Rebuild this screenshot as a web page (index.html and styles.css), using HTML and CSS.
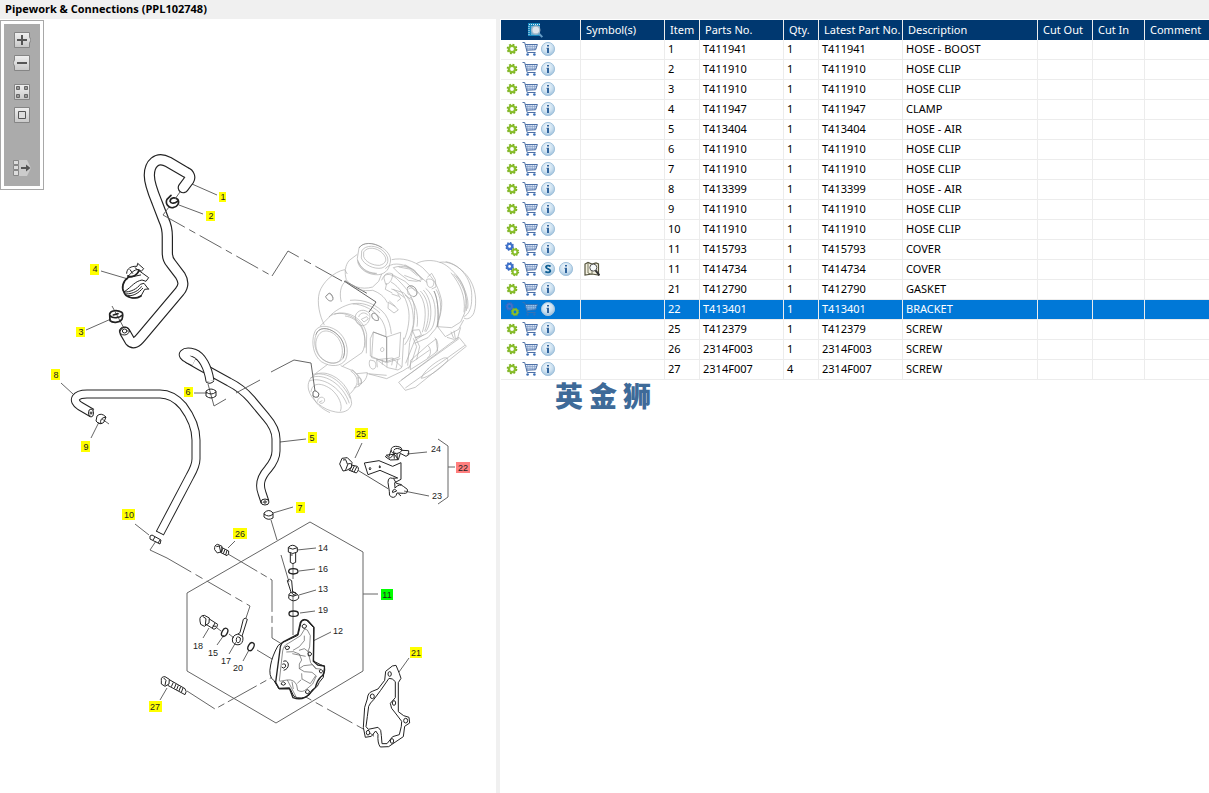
FILE: index.html
```html
<!DOCTYPE html>
<html lang="en">
<head>
<meta charset="utf-8">
<title>Pipework &amp; Connections (PPL102748)</title>
<link rel="stylesheet" href="styles.css">
</head>
<body>
<svg class="defs" width="0" height="0" aria-hidden="true">
  <defs>
    <radialGradient id="ball" cx="45%" cy="35%" r="65%"><stop offset="0" stop-color="#f4f9fd"/><stop offset=".6" stop-color="#cbe0f0"/><stop offset="1" stop-color="#9fc1dc"/></radialGradient>
    <linearGradient id="key" x1="0" y1="0" x2="0" y2="1"><stop offset="0" stop-color="#f0f0f0"/><stop offset="1" stop-color="#c8c8c8"/></linearGradient>
    <symbol id="cog" viewBox="0 0 16 16"><circle cx="8" cy="8" r="3.1" fill="none" stroke="#8abf2c" stroke-width="2.4"/><circle cx="8" cy="8" r="4.6" fill="none" stroke="#7ab021" stroke-width="1.5" stroke-dasharray="1.9 1.71"/></symbol>
    <symbol id="cogs" viewBox="0 0 16 16"><circle cx="5.6" cy="5.4" r="2.5" fill="none" stroke="#3f72cc" stroke-width="2.2"/><circle cx="5.6" cy="5.4" r="3.8" fill="none" stroke="#3565bd" stroke-width="1.2" stroke-dasharray="1.5 1.48"/><circle cx="11" cy="11" r="2.4" fill="none" stroke="#8abf2c" stroke-width="2"/><circle cx="11" cy="11" r="3.6" fill="none" stroke="#7ab021" stroke-width="1.2" stroke-dasharray="1.4 1.43"/></symbol>
    <symbol id="cart" viewBox="0 0 16 16"><path d="M3 3.500H15.400L13.800 8.600 4.800 9.400Z" fill="#e4ecf7"/><path d="M5.700 3.700V9M8 3.700V9M10.300 3.700V9M12.600 3.700V9M3.600 5.500H15M4 7.300H14.400" fill="none" stroke="#7f9cc8" stroke-width=".7"/><path d="M.5 1.500H2.700L5.200 11.500H13.600M3.200 3.500H15.400L13.600 8.800 4.800 9.200" fill="none" stroke="#4d70a6"/><circle cx="5.600" cy="13.500" r="1.300" fill="#3b6eb5"/><circle cx="12.400" cy="13.500" r="1.300" fill="#3b6eb5"/></symbol>
    <symbol id="info" viewBox="0 0 16 16"><circle cx="8" cy="8" r="6.6" fill="url(#ball)" stroke="#a3c3dd"/><path d="M7 4H9V5.6H7ZM6.500 6.800H9V12H7V7.800H6.500Z" fill="#2f639c"/></symbol>
    <symbol id="super" viewBox="0 0 16 16"><circle cx="8" cy="8" r="6.6" fill="url(#ball)" stroke="#a3c3dd"/><path d="M10.6 5.4C9.4 4.4 6 4.2 6 6.1 6 8.3 10.3 7.3 10.3 9.8 10.3 12 6.5 11.6 5.3 10.6" fill="none" stroke="#0d5d92" stroke-width="1.9"/></symbol>
    <symbol id="book" viewBox="0 0 16 16"><path d="M1 3V14L8 13 14.5 14V3L12 2 8 3 4 1.5Z" fill="#f3f0df" stroke="#55543f" stroke-width="1.2"/><path d="M4 2V12L8 13.5V3" fill="none" stroke="#77765f"/><circle cx="9.3" cy="6.6" r="3.5" fill="#f7fafb" stroke="#555"/><path d="M11.5 9.3L15.5 14.5" stroke="#333" stroke-width="2"/></symbol>
    <symbol id="find" viewBox="0 0 16 16"><path d="M1 1H13V14H1Z" fill="#1687be"/><path d="M2 2.5H13M2 4V14" stroke="#d8edf7" stroke-dasharray="1 1"/><path d="M4 4H13V13H4Z" fill="#69aed2"/><circle cx="8.8" cy="8" r="4" fill="#dce5ed" stroke="#a2b8c9" stroke-width="1.3"/><path d="M11.8 11.3L15.3 15.2" stroke="#679ec8" stroke-width="2"/></symbol>
  </defs>
</svg>

<header class="titlebar"><h1>Pipework &amp; Connections (PPL102748)</h1></header>
<main class="panes">
  <section class="drawing" aria-label="Exploded view">
    <svg class="diagram" viewBox="0 19 496 774" role="img" aria-label="Pipework diagram">
      <g class="leader">
        <path d="M192 184L217 195M179 205L203 214M101 271L128 279M86 330L111 319M61 383L73 394M99 422L91 438M135 524L149 535M194 393L207 393M280 442L306 439M273 513L293 507"/>
        <path d="M112 306L125 330M208 384L214 406L226 399M271 372L294 360L311 363M271 520L277 540M156 541L150 550L167 558M102 419L109 424"/>
        <path d="M272 276L288 251L342 281" stroke-dasharray="42 6 8 5"/><path d="M345 281L370 295" stroke-dasharray="25 5 7 5"/>
        <path d="M167 558L250 606" stroke-dasharray="28 5 8 5"/><path d="M250 606L246 618M228 554L272 580V638L285 646" stroke-dasharray="34 4 7 4"/>
        <path d="M310 522L363 552V671L276 723L187 671V593ZM363 594L378 594M281 555L289 582M293 563V579M293 595V635"/>
        <path d="M297 550L316 548M299 571L315 569M299 595L316 590M300 613L315 611M313 641L331 632M228 548L235 541M362 443L355 458M407 454L427 452M404 491L429 496M438 439L448 446V497L438 504M448 467L455 467M209 628L203 638M224 635L217 645M236 642L229 654M249 650L243 661M217 628L221 631M229 634L234 638M257 650L277 662M409 658L399 672M167 688L160 700"/>
        <path d="M187 691L215 709L276 675" stroke-dasharray="33 4 7 4"/><path d="M286 686L374 735" stroke-dasharray="29 5 8 5"/>
      </g>

      <g class="tube wide" transform="translate(70 140) scale(.3333)">
        <path id="h1" d="M340 143L357 120C362 112 358 101 348 97L295 66C260 47 238 72 238 106C238 130 248 156 261 187L281 239C290 257 292 271 292 290V338C292 352 295 361 303 370L331 407C343 427 341 439 329 454L214 591C201 607 190 614 180 603L165 577"/>
        <use href="#h1" class="bore"/>
        <path class="gap" d="M283 203L303 250"/>
        <ellipse class="ink" cx="163" cy="573" rx="15" ry="12"/><ellipse class="ink" cx="164" cy="573" rx="7" ry="6"/>
        <path class="ink strong" d="M291 178C285 190 295 205 309 203C323 201 329 189 324 179C317 171 302 171 300 184C303 193 315 190 322 184M291 178L303 166M119 522C121 512 141 508 155 517C161 521 159 528 156 538C147 550 127 549 120 542ZM120 527C130 538 149 533 157 525M130 525L144 521"/>
        <path class="ink" d="M170 400C170 385 183 378 201 379L203 370L221 386L214 394L207 389C193 386 180 403 174 409M174 408C188 414 201 406 207 392L236 413L228 424L216 420C193 425 189 437 162 456C154 444 158 424 174 413L212 405M162 456C165 471 193 481 213 468L224 448L236 447M162 456C181 458 203 445 211 433L222 430L235 447M168 462C191 462 208 450 214 440M175 467C191 469 207 458 218 445M180 389L188 400M195 383L207 393"/>
        <path class="ink strong" d="M162 456C154 444 158 424 174 413M162 456C165 471 193 481 213 468M174 408C188 414 201 406 207 392"/>
      </g>

      <g class="tube">
        <path id="h5" d="M187 358.500L200 366L229 382C239 387 244 391 251 399L266 417C273 425 276 432 276 439V451C276 458 273 463 268 469C260 478 259 485 262 493L265 502"/>
        <use href="#h5" class="bore"/>
        <path id="h5b" d="M210 381C208 367 202 356 194 353C184 350 179 355 188 359L194 362"/>
        <use href="#h5b" class="bore"/>
        <path id="h8" d="M92 413L80 406C71 400 76 394 87 394H160C169 394 177 399 183 406C192 418 196 429 196 440V459C196 465 194 469 190 476L160 533"/>
        <use href="#h8" class="bore"/>
        <g class="ink"><path d="M206 382Q210 385 214 381M156 531L164 535"/><ellipse cx="91" cy="413" rx="2.500" ry="4"/><circle cx="91" cy="413" r="1"/><ellipse cx="265" cy="502" rx="4" ry="3"/><circle cx="265" cy="502" r="1.200"/></g>
        <g class="ink strong"><path d="M206 391Q211 387 216 391V396Q211 400 206 396ZM206 392Q211 396 216 392M264 513Q269 508 273 513V518Q268 521 264 517ZM264 514Q269 518 273 514M97 416Q101 412 106 417L104 422Q100 426 96 421ZM101 424Q99 418 106 417M150 536L152 535 161 540 160 544 150 539ZM153 540L155 537M158 543L160 540"/></g>
      </g>
      <g class="leader">
        <path d="M180 192L175 199M169 207L163 215"/><path d="M163 215L272 276" stroke-dasharray="25 5 7 5"/><path d="M236 393L260 380"/>
      </g>

      <g class="turbo" transform="translate(290 230) scale(.3333)">
        <path d="M207 54C218 36 250 36 276 53C297 66 307 86 299 103C297 119 282 137 255 134C225 131 201 111 202 85ZM215 63C226 43 261 45 281 64C301 85 296 106 276 114C252 119 221 104 214 84ZM221 66C232 49 260 52 277 69C295 87 288 101 269 106C248 107 226 95 221 80ZM204 91C209 112 230 128 257 130M205 96C214 118 235 133 261 130M202 73L178 91C165 105 163 130 169 149C180 168 215 181 248 171L266 154L275 132"/>
        <path d="M164 119C132 125 97 157 88 188C80 218 89 258 103 285M117 190C122 187 132 202 128 210C121 218 109 208 107 199ZM110 198C114 185 123 191 129 204M164 119L172 132M169 153C150 164 148 194 154 216M165 151C193 181 219 184 248 181C267 188 283 199 292 218"/>
        <path d="M73 309C80 284 112 283 141 302C170 323 178 362 167 389C154 410 122 413 94 395C70 377 63 338 73 309ZM78 314C85 290 114 291 137 309C164 330 169 363 159 385C147 402 119 405 96 387C74 368 70 336 78 314ZM84 318C98 292 129 303 145 325C160 348 161 376 149 392C129 410 99 394 85 372C74 349 76 332 84 318M90 289L122 257C142 243 177 250 203 272C228 296 230 346 216 368L158 408M117 261C131 244 161 226 187 221C222 224 252 239 275 270C285 287 290 306 287 320M133 253C171 239 220 263 230 313L229 370M165 258C204 263 229 299 225 353M188 222C212 215 248 226 270 249M180 211C220 206 263 224 286 254C296 269 302 289 304 312"/>
        <path d="M250 306L290 321 332 307 328 381 289 395 245 383ZM290 321V395M250 306L241 326V378L289 398L331 386M272 357C276 348 284 354 281 362C275 368 270 363 272 357M240 390C236 397 237 414 247 417C260 419 260 400 253 393ZM260 389L308 384L318 395L336 412L324 420L293 413ZM237 432L290 446L338 423L357 411M231 431L290 436M260 389L262 412M277 389V404M291 386V412M309 384L305 406M324 388L318 416"/>
        <path d="M196 258C202 239 224 235 238 250C244 265 234 286 218 287C203 286 196 276 196 258ZM206 261C211 244 229 247 235 257M214 268L230 260L235 267L222 276ZM246 252C252 244 268 257 265 271C255 275 242 263 246 252M295 217L316 230 325 240 312 249 294 235ZM298 213L317 230"/>
        <path d="M275 151C285 123 308 132 327 153C344 170 360 187 370 216C378 247 373 292 359 336M282 145C280 131 297 126 308 132C307 147 301 161 287 163ZM305 133L345 154 376 183M303 156C330 171 346 200 354 231C362 262 354 303 343 328M290 160L286 178 307 189M305 89C337 82 371 92 398 113L415 131C435 151 448 180 455 213C457 238 448 271 437 296L414 323L374 340M286 116C303 97 335 98 363 116L387 137L412 158M310 113C340 103 361 113 377 126L398 148L380 154L355 151L325 128ZM326 111L358 117L383 138M344 104L373 120L394 147M343 136L393 155"/>
        <path d="M352 174C358 162 374 168 378 178C384 188 381 199 370 200L354 192ZM356 177C364 170 374 175 378 184M345 195C363 208 372 245 370 283C366 309 356 329 344 345M360 201C380 225 386 262 381 290M382 184C408 210 412 259 397 307M391 183C420 211 421 263 404 304M400 180C432 215 426 279 407 306M407 175C436 198 442 246 430 285C424 306 399 321 374 322M367 301L388 299 394 314 377 324ZM304 177L340 188 361 208M310 178L342 202M305 192L326 199M323 191L332 206L322 214"/>
        <path d="M379 101C399 89 430 90 446 96C469 101 488 122 505 142C528 171 532 211 524 249L512 276 485 293 442 290M449 97C476 92 507 108 532 138C558 170 562 216 552 248C545 265 530 270 522 264M467 95C515 104 549 154 545 206C546 231 537 254 521 260M483 128C511 163 528 199 522 247M491 132C518 163 536 202 529 243M499 137C524 168 538 207 533 236M412 142L425 130 436 149 438 171 425 177M410 148C426 144 437 153 429 168C420 178 409 170 410 148M432 183C442 203 447 238 443 290M443 290L466 320 506 298L521 270M438 178C452 198 457 236 446 269M483 305L491 325M492 302L496 325M471 322L491 328L503 324L512 292"/>
        <path d="M326 457L346 481 376 472 529 349 507 322 481 340ZM334 450L507 326M346 474L525 346M413 347C424 352 425 378 411 385M362 391L412 347L438 327L443 363L413 386L361 419ZM366 397L419 360M434 323C445 331 447 356 438 365M394 445C400 425 430 400 455 387C469 379 479 385 470 395C450 418 415 442 394 445M370 325L380 350L369 384L356 416M377 324L389 350L380 389M401 314L374 332L347 400M341 323L336 411M359 337L353 407"/>
        <path d="M56 480C48 448 74 422 112 431C151 442 181 478 185 520C181 544 156 550 137 546C99 540 64 510 56 480ZM63 486C66 454 99 459 125 479C147 498 159 526 151 544M58 453C95 438 151 471 171 523M61 444C100 426 159 461 178 520M68 433C113 425 156 451 181 506M76 431L113 403M152 407L190 423C213 438 225 468 198 471L181 491M182 423C204 436 208 464 191 475M186 418L204 438 207 468M201 431L232 428C231 451 215 463 202 463M202 444C211 441 217 446 214 462M83 515C82 503 97 497 103 506C108 518 91 525 88 516L97 512M69 497C73 519 96 537 120 548"/>
        <path class="dark" d="M78 314C85 290 114 291 137 309C164 330 169 363 159 385M207 54C218 36 250 36 276 53M352 174C358 162 374 168 378 178C384 188 381 199 370 200M117 190C122 187 132 202 128 210C121 218 109 208 107 199ZM246 252C252 244 268 257 265 271C255 275 242 263 246 252M250 306L290 321V395M432 183C442 203 447 238 443 290"/>
      </g>
      <g class="leader"><path d="M344 281L376 302 369 312M311 363L315 391"/><path d="M313 392Q316 389 319 394L318 397Q315 398 313 396Z"/></g>

      <g class="part" transform="translate(330 420) scale(.3333)">
        <path d="M29 132L36 115 52 113 66 127 64 143 50 151 39 153ZM39 120L47 119 53 134 47 150M53 132Q61 127 68 136L82 139Q90 148 79 159L56 150M67 136L59 151M73 138L65 154M80 141L72 157"/>
        <path d="M103 129L147 122 188 139 213 128V178L194 188L195 204Q209 189 220 199L232 208Q235 222 220 220L201 219Q197 236 184 231Q176 228 178 214L174 187Q175 170 187 175L203 174 150 151 114 164ZM191 176L199 190 215 194M187 216Q192 201 200 213L187 218M205 221L213 228M120 142Q125 145 120 150Q115 147 120 142M149 137Q153 139 150 144Q145 143 149 137"/>
        <path d="M184 94C180 79 198 75 213 83Q220 90 211 97Q199 105 187 98ZM192 90Q200 80 216 91L236 92V104L228 109L211 100 205 119 181 120 167 111Q166 104 181 104L193 103 205 118M169 105L180 115 197 98M183 91L177 110M191 92L193 116M201 101L202 119"/>
        <path class="thin" d="M84 151L174 206"/>
      </g>

      <g class="part" transform="translate(180 520) scale(.3333)">
        <path d="M325 82Q338 69 352 83V96Q338 105 325 96ZM325 83Q338 92 352 83M331 98V127Q338 135 347 127V98M331 105H338"/>
        <g class="heavy"><ellipse cx="340" cy="154" rx="14" ry="8"/><ellipse cx="341" cy="281" rx="14" ry="8"/></g>
        <path d="M322 182Q328 174 335 182L338 216Q359 222 356 235Q341 250 326 235Q325 221 333 216ZM326 225Q340 233 353 224M334 218Q340 213 348 219L343 226Z"/>
        <path d="M104 89Q102 75 113 73L126 79 125 95 112 99ZM109 80L118 78 122 96M124 82L146 93Q148 103 141 107L121 97M128 85L124 98M135 88L130 101M141 91L137 105"/>
        <path d="M60 303Q57 287 73 286L88 294 87 309 73 319 62 313ZM68 289L78 296 76 315M88 297L113 313Q112 326 102 328L78 313M105 309L97 324M98 318L108 319"/>
        <g class="heavy"><ellipse cx="134" cy="337" rx="8" ry="13" transform="rotate(28 134 337)"/><ellipse cx="213" cy="380" rx="8" ry="13" transform="rotate(28 213 380)"/></g>
        <path d="M190 298Q195 291 202 298L187 346Q193 363 181 373Q166 378 158 366Q153 347 174 342L180 338ZM169 358Q170 346 181 354Q182 369 173 368Q168 367 169 358M174 342L187 349"/>
      </g>

      <g class="part" transform="translate(150 610) scale(.3333)">
        <path class="cover" d="M393 100L444 76 454 34Q463 23 472 33L491 53V148L492 154 512 164 524 169 520 202Q505 218 502 229L485 241 478 255Q453 272 431 258L421 237 387 237 372 212Q354 200 362 165 366 140 384 107Z"/>
        <path class="strong" d="M377 217L390 119Q391 97 407 92L443 73 451 38Q459 24 474 32L492 52 490 154 503 165 523 168Q527 192 512 201Q500 214 496 233L481 249Q460 274 429 263L418 234L387 235Z"/>
        <path class="fine" d="M388 213L398 123Q401 105 415 100L452 77 464 57 472 60 481 77 479 111 474 125 482 158 497 176L512 177M389 214L411 210Q432 207 440 225L443 241Q457 249 469 238L488 222 499 198L486 187 463 185L448 176V162L455 150 448 132 430 125 409 126M429 121L448 110 463 92V77M447 121L463 116 478 127M427 131L467 139M448 176L461 167 488 164 499 176M455 190L456 207 481 221L497 197M454 209L442 220M412 210L425 235 437 258M426 215L430 237"/>
        <path d="M456 48Q462 37 470 48Q467 59 459 54ZM405 112Q412 104 419 111Q418 120 409 119ZM474 130Q480 121 485 132Q482 141 475 137ZM508 181Q514 174 519 184Q513 193 509 187ZM394 219Q401 211 407 222Q401 229 394 223ZM467 243Q474 234 479 246Q474 255 467 249ZM400 154Q411 149 415 162Q416 177 401 181M397 163Q407 158 407 170Q400 178 395 171"/>
        <path d="M34 211Q32 200 45 200L58 208 57 222 45 229 34 222ZM41 204L48 211 45 226M58 209L105 236Q112 245 105 254L53 226M70 217L64 230M78 222L73 235M85 226L80 239M92 230L87 243M99 234L94 247"/>
      </g>

      <g class="part" transform="translate(310 630) scale(.3333)">
        <path class="gasket" fill-rule="evenodd" d="M227 124L247 108 258 106 268 130 273 145 265 158V245L281 257 297 262 299 279 284 289 280 320 249 341 236 350 211 351Q202 340 204 313L197 303 184 319 166 322 160 292 164 232 172 207Q173 188 187 184L204 177 224 151ZM237 145L212 181 191 209Q180 219 176 229L172 260 168 290 175 298 204 292Q215 298 214 316L216 341 231 341 248 320 268 314 274 289 275 274 256 249Q241 235 241 220L256 203V155L247 147Z"/>
        <ellipse cx="239" cy="132" rx="5" ry="7"/><ellipse cx="187" cy="199" rx="6" ry="7"/><ellipse cx="252" cy="219" rx="5" ry="7"/><ellipse cx="287" cy="272" rx="6" ry="7"/><ellipse cx="246" cy="333" rx="5" ry="7"/><ellipse cx="174" cy="308" rx="5" ry="7"/><path class="thin" d="M178 307L192 319"/>
      </g>

      <g class="tag">
        <rect x="219" y="192" width="7" height="10"/><rect x="206" y="211" width="9" height="10"/><rect x="76" y="327" width="9" height="10"/><rect x="90" y="264" width="9" height="11"/><rect x="51" y="369" width="9" height="11"/><rect x="184" y="387" width="9" height="10"/><rect x="81" y="441" width="9" height="11"/><rect x="122" y="509" width="13" height="11"/><rect x="308" y="432" width="9" height="11"/><rect x="296" y="502" width="9" height="11"/><rect x="233" y="528" width="14" height="11"/><rect x="355" y="428" width="13" height="11"/><rect x="149" y="701" width="13" height="11"/><rect x="410" y="647" width="12" height="11"/>
        <rect class="picked" x="456" y="462" width="14" height="11"/><rect class="assembly" x="381" y="589" width="12" height="11"/>
      </g>
      <g class="label">
        <text x="223" y="200">1</text><text x="211" y="219">2</text><text x="81" y="335">3</text><text x="95" y="272">4</text><text x="312" y="441">5</text><text x="188" y="395">6</text><text x="300" y="511">7</text><text x="56" y="378">8</text><text x="86" y="450">9</text><text x="129" y="518">10</text><text x="387" y="598">11</text><text x="338" y="634">12</text><text x="323" y="592">13</text><text x="323" y="551">14</text><text x="213" y="656">15</text><text x="323" y="572">16</text><text x="226" y="664">17</text><text x="198" y="649">18</text><text x="323" y="613">19</text><text x="238" y="671">20</text><text x="416" y="656">21</text><text x="463" y="471">22</text><text x="437" y="499">23</text><text x="436" y="452">24</text><text x="361" y="437">25</text><text x="240" y="537">26</text><text x="155" y="710">27</text>
      </g>
    </svg>
    <div class="tools" role="toolbar" aria-label="Drawing tools">
      <button aria-label="Zoom in"><svg viewBox="0 0 18 18"><path d="M1.500 1.500H16.500V6L18 9 16.500 12V16.500H1.500Z" fill="url(#key)" stroke="#858585"/><path d="M4 9H14M9 4V14" stroke="#555" stroke-width="2"/></svg></button>
      <button aria-label="Zoom out"><svg viewBox="0 0 18 18"><path d="M1.500 1.500H16.500V16.500H1.500V12L0 9 1.500 6Z" fill="url(#key)" stroke="#858585"/><path d="M4 9H14" stroke="#555" stroke-width="2"/></svg></button>
      <button class="group" aria-label="Fit all"><svg viewBox="0 0 18 18"><path d="M1.500 1.500H16.500V16.500H1.500Z" fill="url(#key)" stroke="#858585"/><path d="M3.500 3.500H6.500V6.500H3.500ZM11.500 3.500H14.500V6.500H11.500ZM3.500 11.500H6.500V14.500H3.500ZM11.500 11.500H14.500V14.500H11.500Z" fill="#999" stroke="#666"/></svg></button>
      <button aria-label="Actual size"><svg viewBox="0 0 18 18"><path d="M1.500 1.500H16.500V16.500H1.500Z" fill="url(#key)" stroke="#858585"/><path d="M5.500 5.500H12.500V12.500H5.500Z" fill="#ddd" stroke="#555"/></svg></button>
      <button class="last" aria-label="Hide panel"><svg viewBox="0 0 18 18"><path d="M6 1H14L18 9 14 17H6Z" fill="#ccc"/><path d="M.5 1.500H5.500V5.500H.5ZM.5 6.500H5.500V10.500H.5ZM.5 11.500H5.500V16.500H.5Z" fill="#ddd" stroke="#888"/><path d="M8 9H15" stroke="#555" stroke-width="2"/><path d="M13 5.500L17.500 9 13 12.500Z" fill="#555"/></svg></button>
    </div>
  </section>

  <section class="parts" aria-label="Parts list">
    <table>
      <colgroup><col class="w-act"><col class="w-mid"><col class="w-num"><col class="w-mid"><col class="w-num"><col class="w-mid"><col class="w-desc"><col class="w-out"><col class="w-in"><col></colgroup>
      <thead><tr><th class="center"><svg class="icon" role="img" aria-label="Actions"><use href="#find"/></svg></th><th>Symbol(s)</th><th>Item</th><th>Parts No.</th><th>Qty.</th><th>Latest Part No.</th><th>Description</th><th>Cut Out</th><th>Cut In</th><th>Comment</th></tr></thead>
      <tbody>
        <tr><td><div class="acts"><button aria-label="Part"><svg><use href="#cog"/></svg></button><button aria-label="Add to cart"><svg><use href="#cart"/></svg></button><button aria-label="Info"><svg><use href="#info"/></svg></button></div></td><td></td><td>1</td><td>T411941</td><td>1</td><td>T411941</td><td>HOSE - BOOST</td><td></td><td></td><td></td></tr>
        <tr><td><div class="acts"><button aria-label="Part"><svg><use href="#cog"/></svg></button><button aria-label="Add to cart"><svg><use href="#cart"/></svg></button><button aria-label="Info"><svg><use href="#info"/></svg></button></div></td><td></td><td>2</td><td>T411910</td><td>1</td><td>T411910</td><td>HOSE CLIP</td><td></td><td></td><td></td></tr>
        <tr><td><div class="acts"><button aria-label="Part"><svg><use href="#cog"/></svg></button><button aria-label="Add to cart"><svg><use href="#cart"/></svg></button><button aria-label="Info"><svg><use href="#info"/></svg></button></div></td><td></td><td>3</td><td>T411910</td><td>1</td><td>T411910</td><td>HOSE CLIP</td><td></td><td></td><td></td></tr>
        <tr><td><div class="acts"><button aria-label="Part"><svg><use href="#cog"/></svg></button><button aria-label="Add to cart"><svg><use href="#cart"/></svg></button><button aria-label="Info"><svg><use href="#info"/></svg></button></div></td><td></td><td>4</td><td>T411947</td><td>1</td><td>T411947</td><td>CLAMP</td><td></td><td></td><td></td></tr>
        <tr><td><div class="acts"><button aria-label="Part"><svg><use href="#cog"/></svg></button><button aria-label="Add to cart"><svg><use href="#cart"/></svg></button><button aria-label="Info"><svg><use href="#info"/></svg></button></div></td><td></td><td>5</td><td>T413404</td><td>1</td><td>T413404</td><td>HOSE - AIR</td><td></td><td></td><td></td></tr>
        <tr><td><div class="acts"><button aria-label="Part"><svg><use href="#cog"/></svg></button><button aria-label="Add to cart"><svg><use href="#cart"/></svg></button><button aria-label="Info"><svg><use href="#info"/></svg></button></div></td><td></td><td>6</td><td>T411910</td><td>1</td><td>T411910</td><td>HOSE CLIP</td><td></td><td></td><td></td></tr>
        <tr><td><div class="acts"><button aria-label="Part"><svg><use href="#cog"/></svg></button><button aria-label="Add to cart"><svg><use href="#cart"/></svg></button><button aria-label="Info"><svg><use href="#info"/></svg></button></div></td><td></td><td>7</td><td>T411910</td><td>1</td><td>T411910</td><td>HOSE CLIP</td><td></td><td></td><td></td></tr>
        <tr><td><div class="acts"><button aria-label="Part"><svg><use href="#cog"/></svg></button><button aria-label="Add to cart"><svg><use href="#cart"/></svg></button><button aria-label="Info"><svg><use href="#info"/></svg></button></div></td><td></td><td>8</td><td>T413399</td><td>1</td><td>T413399</td><td>HOSE - AIR</td><td></td><td></td><td></td></tr>
        <tr><td><div class="acts"><button aria-label="Part"><svg><use href="#cog"/></svg></button><button aria-label="Add to cart"><svg><use href="#cart"/></svg></button><button aria-label="Info"><svg><use href="#info"/></svg></button></div></td><td></td><td>9</td><td>T411910</td><td>1</td><td>T411910</td><td>HOSE CLIP</td><td></td><td></td><td></td></tr>
        <tr><td><div class="acts"><button aria-label="Part"><svg><use href="#cog"/></svg></button><button aria-label="Add to cart"><svg><use href="#cart"/></svg></button><button aria-label="Info"><svg><use href="#info"/></svg></button></div></td><td></td><td>10</td><td>T411910</td><td>1</td><td>T411910</td><td>HOSE CLIP</td><td></td><td></td><td></td></tr>
        <tr><td><div class="acts"><button aria-label="Assembly"><svg><use href="#cogs"/></svg></button><button aria-label="Add to cart"><svg><use href="#cart"/></svg></button><button aria-label="Info"><svg><use href="#info"/></svg></button></div></td><td></td><td>11</td><td>T415793</td><td>1</td><td>T415793</td><td>COVER</td><td></td><td></td><td></td></tr>
        <tr><td><div class="acts"><button aria-label="Assembly"><svg><use href="#cogs"/></svg></button><button aria-label="Add to cart"><svg><use href="#cart"/></svg></button><button aria-label="Supersession"><svg><use href="#super"/></svg></button><button aria-label="Info"><svg><use href="#info"/></svg></button></div></td><td><div class="acts"><button aria-label="Look up"><svg><use href="#book"/></svg></button></div></td><td>11</td><td>T414734</td><td>1</td><td>T414734</td><td>COVER</td><td></td><td></td><td></td></tr>
        <tr><td><div class="acts"><button aria-label="Part"><svg><use href="#cog"/></svg></button><button aria-label="Add to cart"><svg><use href="#cart"/></svg></button><button aria-label="Info"><svg><use href="#info"/></svg></button></div></td><td></td><td>21</td><td>T412790</td><td>1</td><td>T412790</td><td>GASKET</td><td></td><td></td><td></td></tr>
        <tr class="selected"><td><div class="acts"><button aria-label="Assembly"><svg><use href="#cogs"/></svg></button><button class="dim" aria-label="Add to cart"><svg><use href="#cart"/></svg></button><button aria-label="Info"><svg><use href="#info"/></svg></button></div></td><td></td><td>22</td><td>T413401</td><td>1</td><td>T413401</td><td>BRACKET</td><td></td><td></td><td></td></tr>
        <tr><td><div class="acts"><button aria-label="Part"><svg><use href="#cog"/></svg></button><button aria-label="Add to cart"><svg><use href="#cart"/></svg></button><button aria-label="Info"><svg><use href="#info"/></svg></button></div></td><td></td><td>25</td><td>T412379</td><td>1</td><td>T412379</td><td>SCREW</td><td></td><td></td><td></td></tr>
        <tr><td><div class="acts"><button aria-label="Part"><svg><use href="#cog"/></svg></button><button aria-label="Add to cart"><svg><use href="#cart"/></svg></button><button aria-label="Info"><svg><use href="#info"/></svg></button></div></td><td></td><td>26</td><td>2314F003</td><td>1</td><td>2314F003</td><td>SCREW</td><td></td><td></td><td></td></tr>
        <tr><td><div class="acts"><button aria-label="Part"><svg><use href="#cog"/></svg></button><button aria-label="Add to cart"><svg><use href="#cart"/></svg></button><button aria-label="Info"><svg><use href="#info"/></svg></button></div></td><td></td><td>27</td><td>2314F007</td><td>4</td><td>2314F007</td><td>SCREW</td><td></td><td></td><td></td></tr>
      </tbody>
    </table>
    <p class="brand" lang="zh-CN"><span>英</span><span>金</span><span>狮</span></p>
  </section>
</main>
</body>
</html>
```

FILE: styles.css
```css
* { box-sizing: border-box; }

body {
  margin: 0;
  min-height: 100vh;
  display: flex;
  flex-direction: column;
  background: #fff;
  color: #000;
  font: 11px/17px "Noto Sans", "Open Sans", sans-serif;
}

.defs { position: absolute; }

button {
  display: block;
  margin: 0;
  padding: 0;
  border: 0;
  background: none;
}

button svg { display: block; width: 100%; height: 100%; }

.titlebar { background: #f0f0f0; padding: 0 5px 2px; }
.titlebar h1 { margin: 0; font: 700 11px/17px "Open Sans", "Noto Sans", sans-serif; }

.panes { flex: 1; display: flex; }

.drawing {
  flex: 0 0 500px;
  position: relative;
  border-right: 4px solid #f0f0f0;
}

.diagram { display: block; width: 100%; height: auto; }

.tools {
  position: absolute;
  top: 1px;
  left: 0;
  display: flex;
  flex-direction: column;
  align-items: center;
  gap: 5px;
  width: 44px;
  padding: 10px 0 12px;
  border: 1px solid #a8a8a8;
  background: #ababab;
  box-shadow: inset 0 0 0 3px #fff;
}

.tools button { width: 18px; height: 18px; }
.tools .group { margin-top: 6px; }
.tools .last { margin-top: 30px; }

.leader, .part, .turbo, .ink { fill: none; stroke: #333; stroke-linejoin: round; }
.leader { stroke: #666; stroke-width: 1; }
.part { stroke: #222; stroke-width: 3; }
.part .thin { stroke: #555; }
.part .fine { stroke: #555; stroke-width: 2; }
.part .heavy, .part .strong { stroke-width: 4; }
.part .cover, .part .gasket { fill: #fff; }
.turbo { stroke: #aaa; stroke-width: 2; }
.turbo .dark { stroke: #888; }

.tube { fill: none; stroke: #222; stroke-width: 9; stroke-linejoin: round; }
.tube .bore { stroke: #fff; stroke-width: 7; }
.tube .ink { stroke: #222; stroke-width: 1; }
.tube.wide { stroke-width: 34; stroke-linecap: round; }
.tube.wide .bore { stroke-width: 27; }
.tube.wide .ink { stroke-width: 3; }
.tube.wide .strong { stroke-width: 5; }
.tube.wide .gap { display: none; }

.tag { fill: #ff0; }
.tag .picked { fill: #ff7f7f; }
.tag .assembly { fill: #0f0; }
.label { font: 9px "Liberation Sans", Arial, sans-serif; text-anchor: middle; fill: #222; }

.parts { flex: 1; min-width: 0; padding: 1px 0 0 1px; }

table { width: 100%; table-layout: fixed; border-collapse: separate; border-spacing: 0; }
.w-act { width: 80px; }
.w-mid { width: 84px; }
.w-num { width: 35px; }
.w-desc { width: 135px; }
.w-out { width: 55px; }
.w-in { width: 52px; }

th, td {
  height: 20px;
  padding: 0 0 2px 3px;
  border-right: 1px solid #ececec;
  text-align: left;
  white-space: nowrap;
}

th:last-child, td:last-child { border-right: 0; }
th { padding-left: 5px; background: #003870; color: #fff; font-weight: 400; }
th.center { padding: 0 12px 0 0; }
td { border-bottom: 1px solid #ececec; }
.icon { display: block; width: 16px; height: 16px; margin: 0 auto; }
.selected td { background: #0078d7; color: #fff; }

.acts { display: flex; gap: 2px; }
.acts button { width: 16px; height: 16px; }
.dim { opacity: .7; }

.brand {
  display: flex;
  gap: 6px;
  margin: 0;
  padding-left: 54px;
  color: #3e6a98;
  font: 900 28px/30px "Noto Sans CJK SC", sans-serif;
}
```
